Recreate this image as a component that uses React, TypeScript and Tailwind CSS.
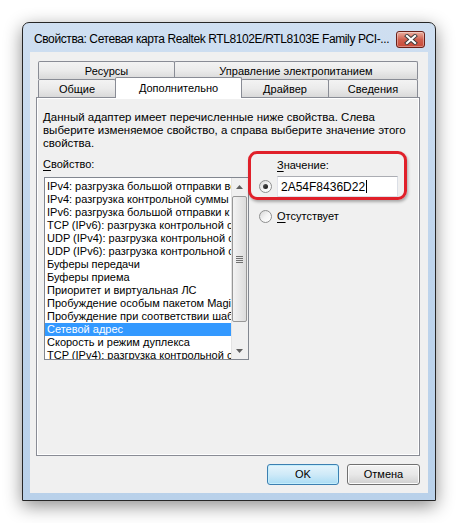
import React from "react";

const font = "font-['Liberation_Sans',Arial,sans-serif]";

const items = [
  "IPv4: разгрузка большой отправки версии 2",
  "IPv4: разгрузка контрольной суммы",
  "IPv6: разгрузка большой отправки  к",
  "TCP (IPv6): разгрузка контрольной суммы",
  "UDP (IPv4): разгрузка контрольной суммы",
  "UDP (IPv6): разгрузка контрольной суммы",
  "Буферы передачи",
  "Буферы приема",
  "Приоритет и виртуальная ЛС",
  "Пробуждение особым пакетом Magic Packet",
  "Пробуждение при соответствии шаблону",
  "Сетевой адрес",
  "Скорость и режим дуплекса",
  "TCP (IPv4): разгрузка контрольной суммы",
];

function CloseButton() {
  return (
    <div className="mt-[8px] flex h-[17px] w-[29px] shrink-0 items-center justify-center rounded-[3px] border border-[#6b2018] bg-gradient-to-b from-[#eab0a2] via-[#d0604f] to-[#c84a38] shadow-[inset_0_0_0_1px_rgba(255,255,255,0.35)]">
      <svg width="14" height="11" viewBox="0 0 14 11">
        <path d="M3 2 L11 9 M11 2 L3 9" stroke="#3b3b3b" strokeWidth="4" strokeLinecap="square" />
        <path d="M3 2 L11 9 M11 2 L3 9" stroke="#ffffff" strokeWidth="2.2" strokeLinecap="square" />
      </svg>
    </div>
  );
}

function Radio({ checked }: { checked?: boolean }) {
  return (
    <div className="flex h-[13px] w-[13px] shrink-0 items-center justify-center rounded-full border border-[#8e8f8f] bg-gradient-to-br from-[#d6d6d6] via-[#f4f4f4] to-white">
      {checked && <div className="h-[5px] w-[5px] rounded-full bg-gradient-to-br from-[#5a5a5a] to-[#111]" />}
    </div>
  );
}

function ScrollBar() {
  return (
    <div className="flex h-full w-[17px] shrink-0 flex-col bg-[#f0f0f0] shadow-[inset_1px_0_0_#e3e3e3]">
      <div className="flex h-[17px] items-center justify-center">
        <svg width="7" height="4" viewBox="0 0 7 4">
          <path d="M0 4 L3.5 0 L7 4 Z" fill="#606060" />
        </svg>
      </div>
      <div className="mx-px mt-px flex h-[126px] items-center justify-center rounded-[2px] border border-[#979797] bg-gradient-to-r from-[#f3f3f3] to-[#dcdcdc]">
        <div className="flex flex-col gap-[1px]">
          <div className="h-px w-[7px] bg-[#707070]" />
          <div className="h-px w-[7px] bg-[#707070]" />
          <div className="h-px w-[7px] bg-[#707070]" />
          <div className="h-px w-[7px] bg-[#707070]" />
        </div>
      </div>
      <div className="flex-1" />
      <div className="flex h-[17px] items-center justify-center">
        <svg width="7" height="4" viewBox="0 0 7 4">
          <path d="M0 0 L7 0 L3.5 4 Z" fill="#606060" />
        </svg>
      </div>
    </div>
  );
}

function Tab({ label, w, selected }: { label: string; w: string; selected?: boolean }) {
  if (selected) {
    return (
      <div className={`relative z-10 -mt-[2px] -ml-px flex h-[21px] items-start justify-center rounded-t-[2px] border border-b-0 border-[#898c95] bg-white pt-[2px] ${w}`}>
        {label}
      </div>
    );
  }
  return (
    <div className={`-ml-px flex h-[18px] items-center justify-center rounded-t-[2px] border border-b-0 border-[#898c95] bg-gradient-to-b from-[#f3f3f3] via-[#ebebeb] to-[#d9d9d9] pt-px first:ml-0 ${w}`}>
      {label}
    </div>
  );
}

export default function App() {
  return (
    <div className={`h-[523px] w-[458px] bg-white pl-[22px] pt-[22px] text-[11px] text-black ${font}`}>
      <div className="flex h-[479px] w-[414px] flex-col rounded-t-[7px] border border-[#262626] bg-gradient-to-b from-[#cfdff1] via-[#bed4ec] to-[#b9d1ea] shadow-[0_5px_18px_rgba(0,0,0,0.45)]">
        {/* title bar */}
        <div className="flex h-[29px] items-start justify-between pl-[11px] pr-[10px]">
          <div className="overflow-hidden whitespace-nowrap pt-[9px] text-[12px] leading-[15px] tracking-[-0.4px] text-black">
            Свойства: Сетевая карта Realtek RTL8102E/RTL8103E Family PCI-...
          </div>
          <CloseButton />
        </div>

        {/* client */}
        <div className="mx-[7px] flex h-[441px] flex-col bg-[#f0f0f0] pl-[6px] pr-[8px] pt-[9px]">
          {/* tabs */}
          <div className="ml-[2px] flex h-[18px]">
            <Tab label="Ресурсы" w="w-[137px]" />
            <Tab label="Управление электропитанием" w="w-[244px]" />
          </div>
          <div className="ml-[2px] flex h-[18px] items-start">
            <Tab label="Общие" w="w-[78px]" />
            <Tab label="Дополнительно" w="w-[127px]" selected />
            <Tab label="Драйвер" w="w-[88px]" />
            <Tab label="Сведения" w="w-[90px]" />
          </div>

          {/* panel */}
          <div className="flex h-[359px] w-[384px] flex-col border border-[#898c95] bg-[#f0f0f0] pl-[6px] pt-[13px] shadow-[inset_1px_1px_0_#fff,inset_-1px_-1px_0_#fff]">
            <div className="whitespace-nowrap text-[11.5px] leading-[13px]">
              Данный адаптер имеет перечисленные ниже свойства. Слева
              <br />
              выберите изменяемое свойство, а справа выберите значение этого
              <br />
              свойства.
            </div>

            <div className="mt-[8px] flex items-start">
              {/* left column */}
              <div className="flex flex-col">
                <div className="leading-[13px]">
                  <u className="underline-offset-2">С</u>войство:
                </div>
                <div className="ml-px mt-[6px] flex h-[183px] w-[205px] border border-[#828790] bg-white">
                  <div className="flex min-w-0 flex-1 flex-col overflow-hidden pt-[2px]">
                    {items.map((it) => (
                      <div
                        key={it}
                        className={`h-[13px] shrink-0 whitespace-nowrap pl-[2px] leading-[13px] ${it === "Сетевой адрес" ? "bg-[#3399ff] text-white" : ""}`}
                      >
                        {it}
                      </div>
                    ))}
                  </div>
                  <ScrollBar />
                </div>
              </div>

              {/* right column */}
              <div className="relative ml-[10px] flex flex-col pt-px">
                <div className="pl-[18px] leading-[13px]">
                  <u className="underline-offset-2">З</u>начение:
                </div>
                <div className="mt-[4px] flex items-center gap-[5px]">
                  <Radio checked />
                  <div className="flex h-[21px] w-[121px] items-center border border-[#abadb3] border-b-[#dbdfe6] border-l-[#e2e3ea] border-r-[#dbdfe6] bg-white pl-[3px] text-[12px]">
                    2A54F8436D22
                    <span className="ml-px inline-block h-[13px] w-px bg-black" />
                  </div>
                </div>
                <div className="mt-[13px] flex items-center gap-[5px]">
                  <Radio />
                  <div className="leading-[13px]">
                    <u className="underline-offset-2">О</u>тсутствует
                  </div>
                </div>

                {/* red annotation frame */}
                <div className="absolute -left-[11px] -top-[7px] h-[49px] w-[159px] rounded-[9px] border-[3px] border-[#e0202a] shadow-[1px_2px_3px_rgba(0,0,0,0.3),inset_0_0_1px_rgba(255,255,255,0.6)]" />
              </div>
            </div>
          </div>

          {/* buttons */}
          <div className="mt-[8px] flex justify-end gap-[8px]">
            <div className="flex h-[21px] w-[72px] items-center justify-center rounded-[3px] border border-[#3c7fb1] bg-gradient-to-b from-[#e5f4fc] via-[#cfeaf8] to-[#aadcf4] shadow-[inset_0_0_0_1px_#c4eefc]">
              OK
            </div>
            <div className="flex h-[21px] w-[73px] items-center justify-center rounded-[3px] border border-[#707070] bg-gradient-to-b from-[#f2f2f2] via-[#e8e8e8] to-[#d0d0d0] shadow-[inset_0_0_0_1px_#fcfcfc]">
              Отмена
            </div>
          </div>
        </div>
      </div>
    </div>
  );
}
